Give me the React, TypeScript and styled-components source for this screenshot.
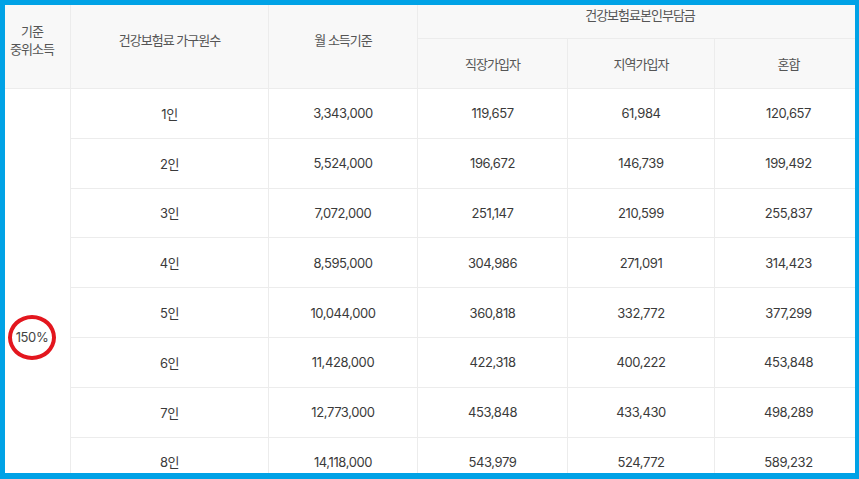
import styled, { createGlobalStyle } from "styled-components";

interface Row {
  members: string;
  income: string;
  employee: string;
  regional: string;
  mixed: string;
}

const rows: Row[] = [
  { members: "1인", income: "3,343,000", employee: "119,657", regional: "61,984", mixed: "120,657" },
  { members: "2인", income: "5,524,000", employee: "196,672", regional: "146,739", mixed: "199,492" },
  { members: "3인", income: "7,072,000", employee: "251,147", regional: "210,599", mixed: "255,837" },
  { members: "4인", income: "8,595,000", employee: "304,986", regional: "271,091", mixed: "314,423" },
  { members: "5인", income: "10,044,000", employee: "360,818", regional: "332,772", mixed: "377,299" },
  { members: "6인", income: "11,428,000", employee: "422,318", regional: "400,222", mixed: "453,848" },
  { members: "7인", income: "12,773,000", employee: "453,848", regional: "433,430", mixed: "498,289" },
  { members: "8인", income: "14,118,000", employee: "543,979", regional: "524,772", mixed: "589,232" },
];

// 열 너비 (표 양끝은 파란 테두리 아래로 조금 숨겨짐)
const colWidths = [77, 198, 149, 150, 147, 148];

const GlobalStyle = createGlobalStyle`
  body {
    margin: 0;
    background: #fff;
    font-family: Inter, "Noto Sans CJK KR", sans-serif;
  }
`;

const Frame = styled.div`
  width: 859px;
  height: 479px;
  box-sizing: border-box;
  border-style: solid;
  border-color: #00a2e6;
  border-width: 5px 4px 6px 5px;
  overflow: hidden;
  background: #fff;
`;

const Table = styled.table`
  border-collapse: collapse;
  table-layout: fixed;
  width: 869px;
  margin: -15px 0 0 -12px;
`;

const HeadRow = styled.tr<{ $height: number }>`
  height: ${(p) => p.$height}px;
`;

const Th = styled.th`
  background: #f8f8f8;
  color: #555;
  font-size: 13px;
  font-weight: 400;
  letter-spacing: -1px;
  line-height: 18px;
  text-align: center;
  vertical-align: middle;
  border: 1px solid #ececec;
  padding: 0;
`;

const BodyRow = styled.tr`
  height: 49.8px;
`;

const Td = styled.td`
  color: #3a3a3a;
  font-size: 13px;
  letter-spacing: -0.4px;
  text-align: center;
  vertical-align: middle;
  border: 1px solid #ececec;
  padding: 0;
`;

const RateCell = styled(Td)`
  padding-top: 99px;
`;

const Circled = styled.span`
  display: inline-flex;
  align-items: center;
  justify-content: center;
  width: 48px;
  height: 45px;
  box-sizing: border-box;
  border: 4px solid #e3161e;
  border-radius: 50%;
  color: #444;
`;

export default function App() {
  return (
    <>
      <GlobalStyle />
      <Frame>
        <Table>
          <colgroup>
            {colWidths.map((w, i) => (
              <col key={i} style={{ width: w }} />
            ))}
          </colgroup>
          <thead>
            <HeadRow $height={48}>
              <Th rowSpan={2}>
                기준
                <br />
                중위소득
              </Th>
              <Th rowSpan={2}>건강보험료 가구원수</Th>
              <Th rowSpan={2}>월 소득기준</Th>
              <Th colSpan={3}>건강보험료본인부담금</Th>
            </HeadRow>
            <HeadRow $height={50}>
              <Th>직장가입자</Th>
              <Th>지역가입자</Th>
              <Th>혼합</Th>
            </HeadRow>
          </thead>
          <tbody>
            {rows.map((r, i) => (
              <BodyRow key={r.members}>
                {i === 0 && (
                  <RateCell rowSpan={rows.length}>
                    <Circled>150%</Circled>
                  </RateCell>
                )}
                <Td>{r.members}</Td>
                <Td>{r.income}</Td>
                <Td>{r.employee}</Td>
                <Td>{r.regional}</Td>
                <Td>{r.mixed}</Td>
              </BodyRow>
            ))}
          </tbody>
        </Table>
      </Frame>
    </>
  );
}
